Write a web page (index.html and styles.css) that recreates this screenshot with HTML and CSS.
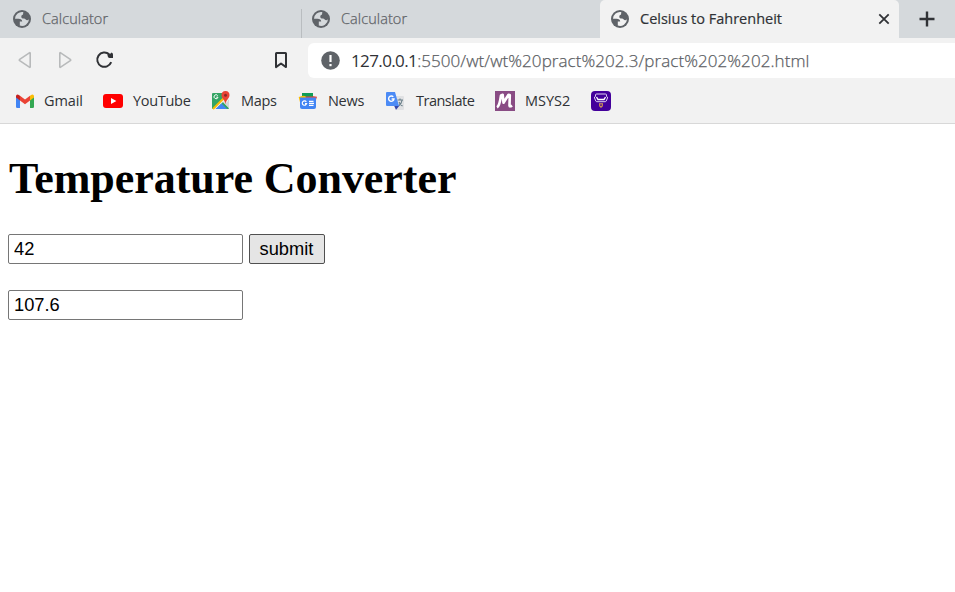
FILE: index.html
```html
<!DOCTYPE html>
<html lang="en">
<head>
<meta charset="utf-8">
<title>Celsius to Fahrenheit</title>
<link rel="stylesheet" href="styles.css">
</head>
<body>
<svg class="symbols" aria-hidden="true">
  <symbol id="globe" viewBox="0 0 18 18">
    <circle cx="9" cy="9" r="9" fill="#5f6368"/>
    <path d="M10.300 2.100A7 7 0 0 0 2 8.800h3.500c2.200 0 3.700 1.100 3.700 2.600H6.800v4.200A7 7 0 0 0 16 9.300c-1.200 1.300-2.500 1.300-3.300.2-.4-.7-1-1-1.900-1-1.900 0-2.500-.7-2.500-2.100 0-1 .9-1.700 1.700-1.700z" fill="var(--land)"/>
  </symbol>
</svg>
<header class="browser">
  <nav class="tabs">
    <div class="tab first"><svg class="globe"><use href="#globe"/></svg><span>Calculator</span></div>
    <div class="tab second"><svg class="globe"><use href="#globe"/></svg><span>Calculator</span></div>
    <div class="tab active"><svg class="globe"><use href="#globe"/></svg><span>Celsius to Fahrenheit</span>
      <svg class="close" viewBox="0 0 12 12"><path d="M1.300 1.300l9.400 9.400M10.700 1.300L1.300 10.700" stroke="#303236" stroke-width="1.800"/></svg>
    </div>
    <div class="new-tab"><svg width="16" height="16" viewBox="0 0 16 16"><path d="M8 .5v15M.5 8h15" stroke="#303236" stroke-width="2.400"/></svg></div>
  </nav>
  <div class="toolbar">
    <svg class="back" width="14" height="18" viewBox="0 0 14 18"><path d="M11.700 1.700L1.700 8.300q-.9.700 0 1.400l10 6.600q.5.200.5-.5V2.200q0-.7-.5-.5z"/></svg>
    <svg class="forward" width="14" height="18" viewBox="0 0 14 18"><path d="M2.300 1.700l10 6.600q.9.700 0 1.400l-10 6.600q-.5.200-.5-.5V2.200q0-.7.500-.5z"/></svg>
    <svg class="reload" width="20" height="18" viewBox="0 0 20 18"><path d="M14.200 3.200A7.200 7.200 0 1 0 16.200 11.200" fill="none" stroke="#303236" stroke-width="2"/><path d="M12.500 2.100Q15 4 16.500 1.600q1.500.3 1.500 2V7h-3.500q-1.500 0-1.900-2z" fill="#303236"/></svg>
    <svg class="bookmark" width="14" height="18" viewBox="0 0 14 18"><path d="M2.500 2h9q.5 0 .5.500v13.600l-5-3.600-5 3.600V2.500Q2 2 2.500 2z" fill="none" stroke="#303236" stroke-width="2" stroke-linejoin="round"/></svg>
    <div class="address">
      <svg width="19" height="19" viewBox="0 0 19 19"><circle cx="9.500" cy="9.500" r="9.300" fill="#5f6368"/><path d="M9.500 4v7" stroke="#fff" stroke-width="2.200"/><path d="M9.500 13v2.200" stroke="#fff" stroke-width="2.200"/></svg>
      <span class="url"><b>127.0.0.1</b>:5500/wt/wt%20pract%202.3/pract%202%202.html</span>
    </div>
  </div>
  <div class="bookmarks">
    <a class="gmail"><svg viewBox="0 0 20 20"><path d="M1 5.500l4 3V17H2.300Q1 17 1 15.700z" fill="#4285f4"/><path d="M15 8.500l4-3v10.200q0 1.300-1.300 1.300H15z" fill="#34a853"/><path d="M15 4.800l1.200-.9Q17.800 3 19 4.800v1.700l-4 3z" fill="#fbbc04"/><path d="M5 4.800L10 8.600l5-3.800v4.700l-5 3.800-5-3.800z" fill="#ea4335"/><path d="M1 6.500V4.800Q2 3 3.800 3.900L5 4.800v4.700z" fill="#c5221f"/></svg><span>Gmail</span></a>
    <a class="youtube"><svg viewBox="0 0 20 20"><rect y="3" width="20" height="14" rx="3" fill="#f00"/><path d="M8 7l5.400 3L8 13z" fill="#fff"/></svg><span>YouTube</span></a>
    <a class="maps"><svg viewBox="0 0 20 20"><path d="M2 2h10l6 8v7q0 1-1 1H2q-1 0-1-1V3q0-1 1-1z" fill="#34a565"/><path d="M2 18L14 5l4 5v7L12 11 5 18z" fill="#eee"/><path d="M2 18L14 6" stroke="#fbbc04" stroke-width="2"/><path d="M4.500 18l6-5.500L16 18z" fill="#4285f4"/><path d="M12 11l6 6V9l-3 3z" fill="#d3d5d7"/><path d="M14.500 0Q10.400.2 10.500 4.200c0 3 3.300 4.300 4 8.800.7-4.500 4-5.800 4-8.800Q18.600.2 14.500 0z" fill="#ea4335"/><circle cx="14.500" cy="4.300" r="1.500" fill="#8c2925"/><path d="M6.700 4.600A2 2 0 1 0 7 6.200H5.300" fill="none" stroke="#fff"/></svg><span>Maps</span></a>
    <a class="news"><svg viewBox="0 0 20 20"><path d="M4 2.500L15 2v7H4z" fill="#0f9d58"/><path d="M.7 6l10-3 2 6-10.500 3z" fill="#fbbc04"/><path d="M8 4l11 1.800L17 12H7z" fill="#ea4335"/><path d="M4 2h11v3.500H8L4 4z" fill="#0f9d58"/><path d="M2 6.500h16v9.500q0 2-2 2H4q-2 0-2-2z" fill="#4285f4"/><path d="M8.300 10.800A2.200 2.200 0 1 0 8.600 12.700H7M11 10.300h4.500M11 12.300h5M11 14.300h4.500" fill="none" stroke="#fff" stroke-width="1.200"/></svg><span>News</span></a>
    <a class="translate"><svg viewBox="0 0 20 20"><path d="M9 5h9q1 0 1 1v12q0 1-1 1h-6z" fill="#e0e1e3"/><path d="M12.500 9H18M15 7.500V9M17 9.500Q16.500 13 13.500 15M14 11q1.500 3 3.500 4" fill="none" stroke="#687e88" stroke-width="1.100"/><path d="M9 14.500h5.500L11 19z" fill="#3446aa"/><path d="M2 1h8l4 14H2q-1 0-1-1V2q0-1 1-1z" fill="#4c8bf5"/><path d="M8.300 5.800A2.700 2.700 0 1 0 9 8H6.600" fill="none" stroke="#fff" stroke-width="1.400"/></svg><span>Translate</span></a>
    <a class="msys"><svg viewBox="0 0 20 20"><path fill="#894c84" d="M0 0h20v20H0z"/><path d="M2 16.300Q4.500 15 6 4.500l1.700-.7.800 7.900 5-7.900 1.300.2-.3 10.500q.2 1.700 2.500-.1" fill="none" stroke="#fff" stroke-width="2.600" stroke-linejoin="round"/></svg><span>MSYS2</span></a>
    <a class="sofa"><svg viewBox="0 0 20 20"><rect width="20" height="20" rx="4" fill="#43009b"/><path d="M4.500 5.500V4q0-1 1-1h9q1 0 1 1v1.500M4.500 5.500Q3 5.800 3.500 7l1.300 3q.3.700 1 .7h8.400q.7 0 1-.7l1.300-3q.5-1.200-1-1.500" fill="none" stroke="#ddd1ef" stroke-width="1"/><path d="M5.500 6l1.500 2.500h6L14.500 6" fill="none" stroke="#fff" stroke-width="1.400"/><path d="M8 12.800h4M8.700 13.300v1.700l1.300 1.300 1.300-1.300v-1.700" fill="none" stroke="#d59b50" stroke-width="1.100"/></svg></a>
  </div>
</header>
<main>
  <h1>Temperature Converter</h1>
  <form>
    <div class="entry"><input type="text" value="42" aria-label="Celsius"><button type="button">submit</button></div>
    <input type="text" value="107.6" aria-label="Fahrenheit">
  </form>
</main>
</body>
</html>
```
FILE: styles.css
```css
* { box-sizing: border-box; }
body { margin: 0; height: 592px; overflow: hidden; background: #fff; font-family: "Open Sans", sans-serif; }
svg { display: block; flex: none; }
.symbols { position: absolute; width: 0; height: 0; }
.browser { height: 124px; background: #f2f2f2; border-bottom: 1px solid #d8d8d8; }
.tabs { display: flex; height: 38px; background: #d5d9dc; }
.tab { --land: #d5d9dc; display: flex; align-items: center; font-size: 14.5px; color: #5f6367; white-space: nowrap; letter-spacing: 0.08px; }
.tab span { font-weight: 300; -webkit-text-stroke: 0.25px; padding-bottom: 2px; }
.globe { width: 18px; height: 18px; margin-right: 11px; }
.first { width: 302px; padding-left: 13px; background: linear-gradient(#b9bdc0, #b9bdc0) right bottom / 1px 29px no-repeat; }
.second { width: 298px; padding-left: 10px; }
.active { --land: #f2f2f2; width: 299px; padding: 0 9px 0 11px; background: #f2f2f2; border-radius: 5px 5px 0 0; color: #303236; letter-spacing: 0; }
.active span { font-weight: 500; -webkit-text-stroke: 0.2px; }
.close { width: 12px; height: 12px; margin-left: auto; }
.new-tab { display: flex; align-items: center; padding-left: 20px; }
.toolbar { display: flex; align-items: center; height: 44px; padding-left: 18px; }
.back, .forward { fill: none; stroke: #b8babb; stroke-width: 1.6; }
.forward { margin-left: 26px; }
.reload { margin-left: 23px; }
.bookmark { margin-left: 159px; }
.address { display: flex; align-items: center; flex: 1; height: 35px; margin-left: 20px; padding-left: 13px; border-radius: 6px 0 0 6px; background: #fff; }
.url { margin-left: 11px; font-size: 17px; font-weight: 300; -webkit-text-stroke: 0.25px; letter-spacing: 0.07px; color: #5c6064; white-space: nowrap; }
.url b { font-weight: 400; -webkit-text-stroke: 0; letter-spacing: -0.62px; color: #303236; }
.bookmarks { display: flex; height: 38px; padding-left: 15px; }
.bookmarks a { display: flex; align-items: center; font-size: 14.5px; letter-spacing: -0.3px; color: #303236; white-space: nowrap; }
.bookmarks svg { width: 20px; height: 20px; }
.bookmarks span { margin-left: 10px; padding-bottom: 2px; }
.gmail { width: 88px; }
.youtube { width: 108px; }
.maps { width: 87px; }
.news { width: 87px; }
.translate { width: 110px; }
.msys { width: 96px; }
.gmail span { margin-left: 9px; letter-spacing: -0.1px; }
.translate span { margin-left: 11px; letter-spacing: -0.5px; }
.msys span { letter-spacing: 0; }
main { padding: 30px 8px 0; }
h1 { margin: 0; height: 80px; padding-left: 1px; font: bold 44px/50px "Liberation Serif", serif; letter-spacing: -0.05px; color: #000; }
form { display: flex; flex-direction: column; gap: 26px; }
.entry { display: flex; gap: 6px; }
input, button { height: 30px; margin: 0; border: 1px solid #767676; border-radius: 2px; font: 18.3px "Liberation Sans", sans-serif; color: #000; }
input { width: 235px; padding: 0 4px 0 5px; background: #fff; }
button { width: 76px; padding: 0 1px 0 0; background: #e5e5e5; border-color: #505050; }
```
